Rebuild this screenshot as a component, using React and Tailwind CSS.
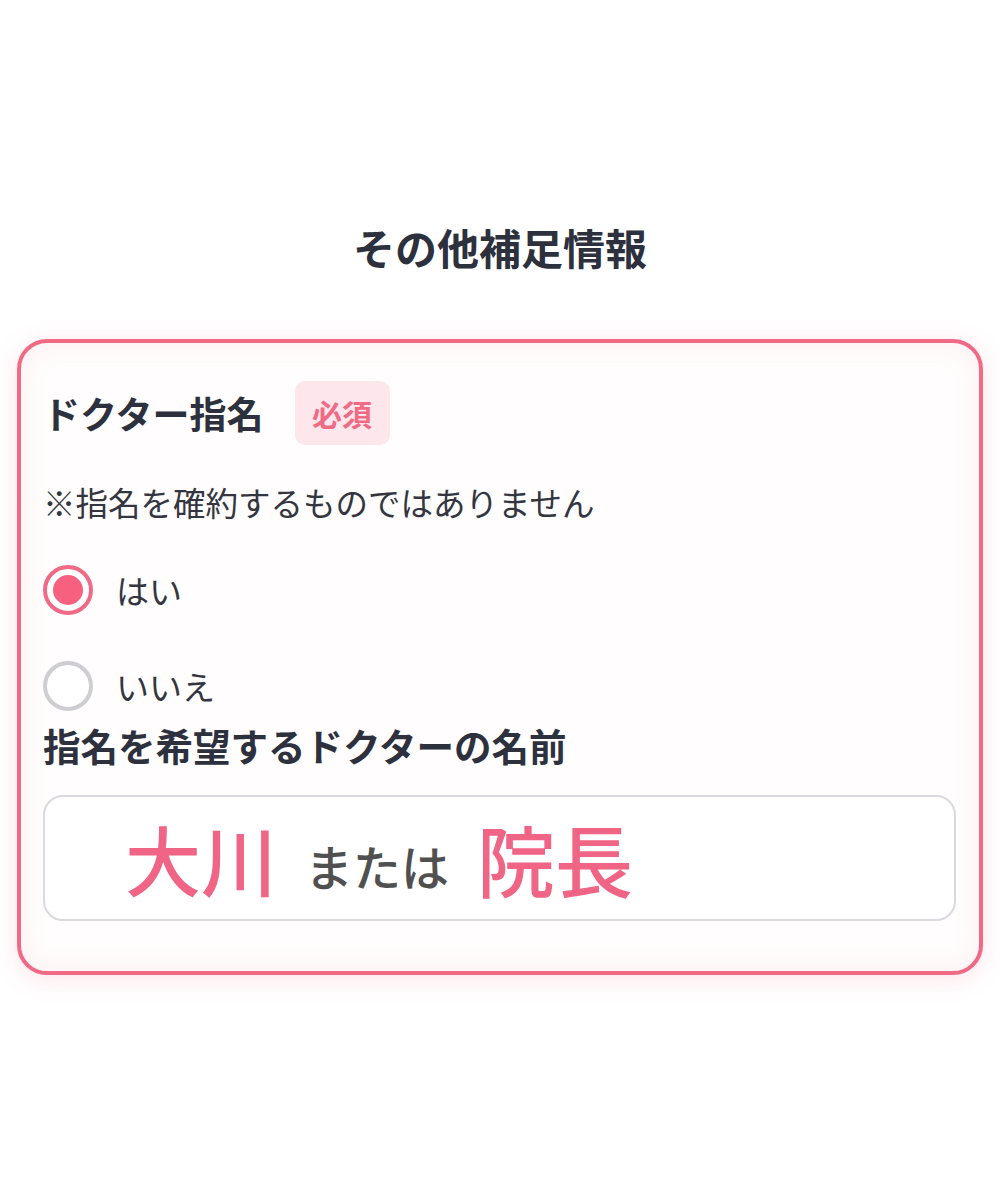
export default function App() {
  const font = { fontFamily: '"Noto Sans CJK JP", "Noto Sans", sans-serif' };
  return (
    <div className="w-[1000px] h-[1189px] bg-white" style={font}>
      <div className="pt-[215px]">
        <h2 className="text-center text-[42px] leading-[64px] font-bold text-[#2d303d]">その他補足情報</h2>
        <div className="mx-[17px] mt-[60px] rounded-[30px] border-[4px] border-[#f06a85] bg-[#fffdfd] pl-[22px] pr-[23px] pt-[38px] pb-[50px] shadow-[0_4px_24px_rgba(240,106,133,0.18),inset_0_0_28px_rgba(240,106,133,0.10)]">
          <div className="flex items-center h-[64px]">
            <span className="text-[37px] font-bold text-[#2d303d] leading-none">ドクター指名</span>
            <span className="ml-[31px] h-[64px] w-[95px] rounded-[10px] bg-[#fde7ec] flex items-center justify-center text-[30px] font-bold text-[#ef6a84] leading-none">必須</span>
          </div>
          <p className="mt-[33px] text-[32.5px] leading-[48px] text-[#333640]">※指名を確約するものではありません</p>
          <div className="mt-[39px] flex items-center h-[50px]">
            <span className="w-[50px] h-[50px] rounded-full border-[4px] border-[#f06a85] bg-white flex items-center justify-center">
              <span className="w-[30px] h-[30px] rounded-full bg-[#f7617f]"></span>
            </span>
            <span className="ml-[23px] text-[33px] text-[#333640] leading-none">はい</span>
          </div>
          <div className="mt-[46px] flex items-center h-[50px]">
            <span className="w-[50px] h-[50px] rounded-full border-[4px] border-[#cdcdd2] bg-white"></span>
            <span className="ml-[23px] text-[33px] text-[#333640] leading-none">いいえ</span>
          </div>
          <p className="mt-[10px] text-[37.5px] font-bold leading-[48px] text-[#2d303d]">指名を希望するドクターの名前</p>
          <div className="mt-[26px] h-[126px] rounded-[20px] border-[2px] border-[#d9d9de] bg-white flex items-center pl-[80px]">
            <span className="text-[76px] font-medium text-[#f06585] leading-none">大川</span>
            <span className="ml-[28px] text-[48px] font-medium text-[#505050] leading-none mt-[14px]">または</span>
            <span className="ml-[28px] text-[78px] font-medium text-[#f06585] leading-none">院長</span>
          </div>
        </div>
      </div>
    </div>
  );
}
